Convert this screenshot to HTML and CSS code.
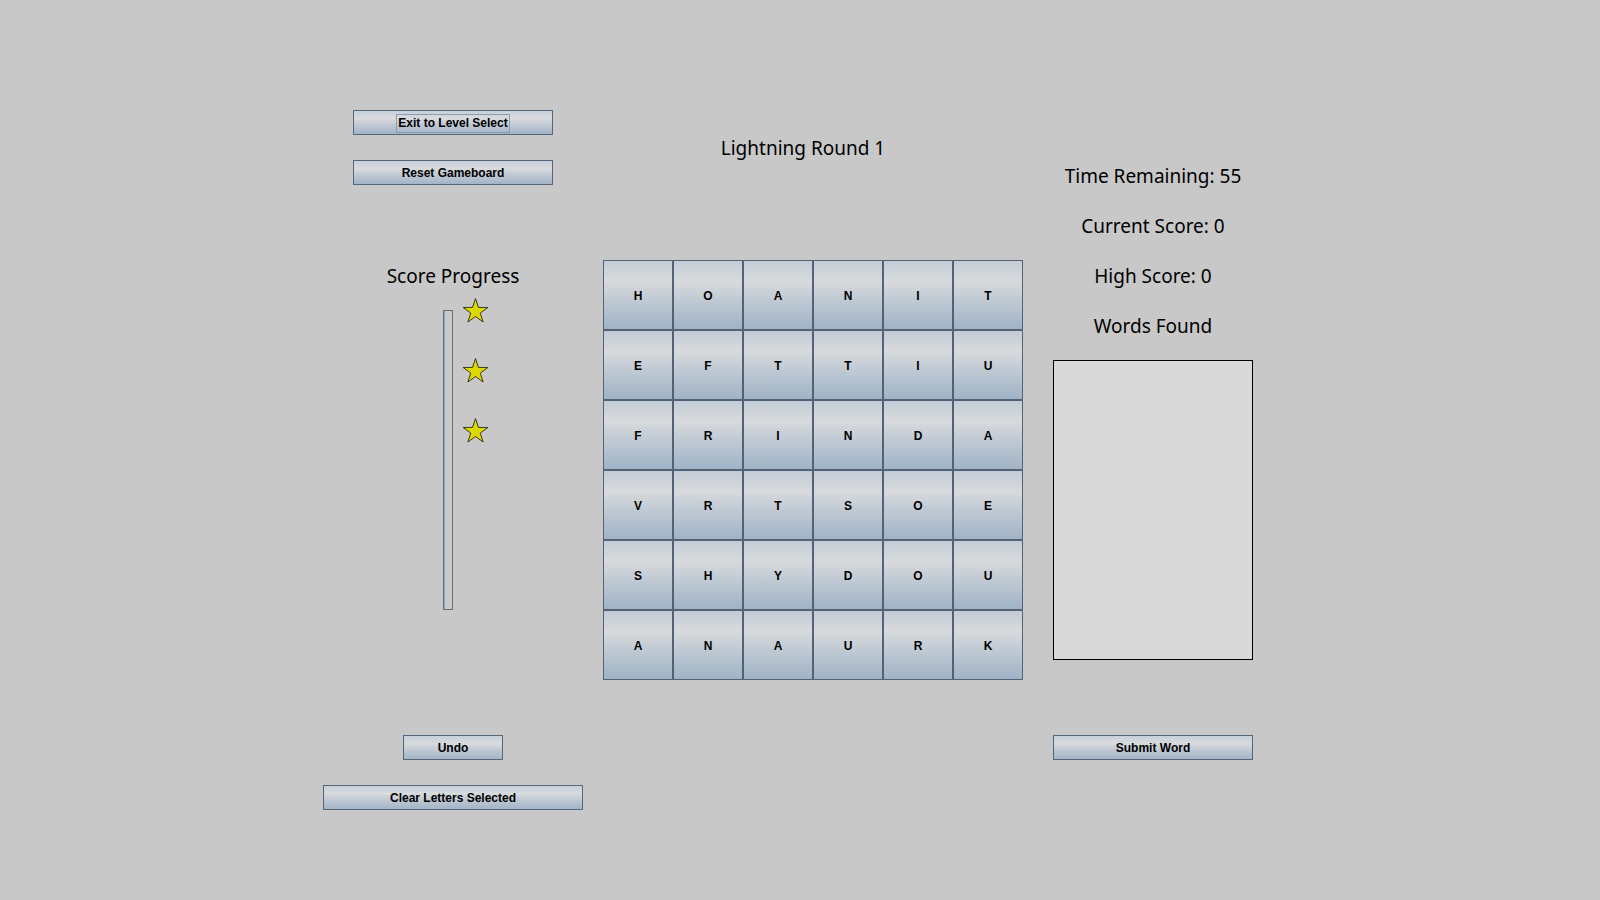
FILE: index.html
```html
<!DOCTYPE html>
<html>
<head>
<meta charset="utf-8">
<title>Lightning Round 1</title>
<link rel="stylesheet" href="styles.css">
</head>
<body>
<div class="screen">
  <div class="col-left">
    <button class="btn btn-wide"><span class="focus">Exit to Level Select</span></button>
    <button class="btn btn-wide gap-25">Reset Gameboard</button>
    <div class="label score-label">Score Progress</div>
    <div class="progress">
      <div class="bar"></div>
      <svg class="star" style="top:-12px" viewBox="0 0 25 25" width="25" height="25"><polygon points="12.5,0.5 15.44,9.45 24.86,9.48 17.26,15.05 20.14,24.02 12.5,18.5 4.86,24.02 7.74,15.05 0.14,9.48 9.56,9.45"/></svg>
      <svg class="star" style="top:48px" viewBox="0 0 25 25" width="25" height="25"><polygon points="12.5,0.5 15.44,9.45 24.86,9.48 17.26,15.05 20.14,24.02 12.5,18.5 4.86,24.02 7.74,15.05 0.14,9.48 9.56,9.45"/></svg>
      <svg class="star" style="top:108px" viewBox="0 0 25 25" width="25" height="25"><polygon points="12.5,0.5 15.44,9.45 24.86,9.48 17.26,15.05 20.14,24.02 12.5,18.5 4.86,24.02 7.74,15.05 0.14,9.48 9.56,9.45"/></svg>
    </div>
    <button class="btn btn-undo">Undo</button>
    <button class="btn btn-clear gap-25">Clear Letters Selected</button>
  </div>

  <div class="col-center">
    <div class="label title">Lightning Round 1</div>
    <div class="board">
      <button class="cell">H</button><button class="cell">O</button><button class="cell">A</button><button class="cell">N</button><button class="cell">I</button><button class="cell">T</button>
      <button class="cell">E</button><button class="cell">F</button><button class="cell">T</button><button class="cell">T</button><button class="cell">I</button><button class="cell">U</button>
      <button class="cell">F</button><button class="cell">R</button><button class="cell">I</button><button class="cell">N</button><button class="cell">D</button><button class="cell">A</button>
      <button class="cell">V</button><button class="cell">R</button><button class="cell">T</button><button class="cell">S</button><button class="cell">O</button><button class="cell">E</button>
      <button class="cell">S</button><button class="cell">H</button><button class="cell">Y</button><button class="cell">D</button><button class="cell">O</button><button class="cell">U</button>
      <button class="cell">A</button><button class="cell">N</button><button class="cell">A</button><button class="cell">U</button><button class="cell">R</button><button class="cell">K</button>
    </div>
  </div>

  <div class="col-right">
    <div class="label">Time Remaining: 55</div>
    <div class="label stat">Current Score: 0</div>
    <div class="label stat">High Score: 0</div>
    <div class="label stat">Words Found</div>
    <div class="words"></div>
    <button class="btn btn-wide btn-submit">Submit Word</button>
  </div>
</div>
</body>
</html>
```
FILE: styles.css
```css
html, body {
  margin: 0;
  padding: 0;
}
body {
  width: 1600px;
  height: 900px;
  background: #c8c8c8;
  overflow: hidden;
  font-family: "Noto Sans", "Open Sans", sans-serif;
  color: #000;
}
.screen {
  display: flex;
  align-items: flex-start;
  padding-left: 323px;
}
.label {
  font-size: 19px;
  line-height: 24px;
  height: 24px;
  text-align: center;
  white-space: nowrap;
}
.btn {
  display: flex;
  align-items: center;
  justify-content: center;
  box-sizing: border-box;
  height: 25px;
  margin: 0;
  padding: 1px 0 0 0;
  border: 1px solid #56677a;
  background: linear-gradient(to bottom, #c6d0db 0%, #d9dbdd 32%, #c4ccd6 55%, #a2b4c7 100%);
  font-family: "Liberation Sans", Arial, sans-serif;
  font-weight: bold;
  font-size: 12px;
  color: #000;
  cursor: pointer;
}
.btn-wide { width: 200px; }
.gap-25 { margin-top: 25px; }
.focus {
  outline: 1px solid #8b9bb0;
  padding: 1px 1px;
  line-height: 15px;
}

/* left column */
.col-left {
  width: 260px;
  display: flex;
  flex-direction: column;
  align-items: center;
  padding-top: 110px;
}
.score-label { margin-top: 79px; }
.progress {
  position: relative;
  align-self: flex-start;
  margin-left: 120px;
  margin-top: 22px;
  width: 60px;
  height: 300px;
}
.bar {
  box-sizing: border-box;
  width: 10px;
  height: 300px;
  border: 1px solid #5f6f80;
  background: linear-gradient(to right, #94a8bc 0, #94a8bc 1px, #c9c9c9 1px, #c9c9c9 100%);
}
.star {
  position: absolute;
  left: 20px;
  overflow: visible;
}
.star polygon {
  fill: #dcd800;
  stroke: #2a2a10;
  stroke-width: 0.9;
  stroke-linejoin: miter;
}
.btn-undo {
  width: 100px;
  margin-top: 125px;
}
.btn-clear { width: 260px; }

/* center column */
.col-center {
  width: 440px;
  padding-top: 136px;
}
.title { text-align: center; }
.board {
  margin-left: 20px;
  margin-top: 100px;
  display: grid;
  grid-template-columns: repeat(6, 70px);
  grid-template-rows: repeat(6, 70px);
  width: 420px;
}
.cell {
  box-sizing: border-box;
  width: 70px;
  height: 70px;
  margin: 0;
  padding: 2px 0 0 0;
  border: 1px solid #536274;
  background: linear-gradient(to bottom, #c3ccd6 0%, #d8dadc 30%, #c2cbd5 55%, #a0b3c6 100%);
  font-family: "Liberation Sans", Arial, sans-serif;
  font-weight: bold;
  font-size: 12px;
  color: #000;
  cursor: pointer;
}

/* right column */
.col-right {
  margin-left: 30px;
  width: 200px;
  display: flex;
  flex-direction: column;
  align-items: center;
  padding-top: 164px;
}
.stat { margin-top: 26px; }
.words {
  box-sizing: border-box;
  margin-top: 22px;
  width: 200px;
  height: 300px;
  border: 1px solid #000;
  background: #d9d9d9;
}
.btn-submit { margin-top: 75px; }
```
